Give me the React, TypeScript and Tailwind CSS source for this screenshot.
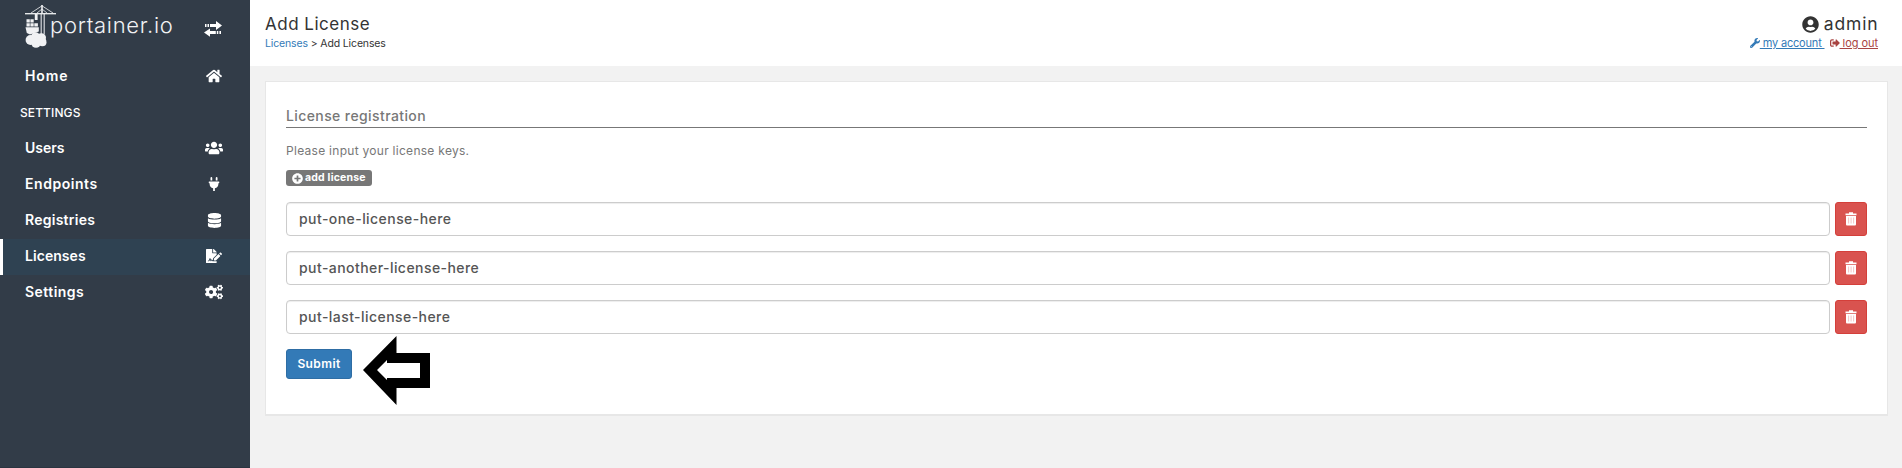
import React from "react";
import { FaCogs, FaDatabase, FaFileSignature, FaHome, FaPlug, FaPlusCircle, FaSignOutAlt, FaUserCircle, FaUsers, FaWrench } from "react-icons/fa";

function Logo() {
  return (
    <svg width="32" height="46" viewBox="0 0 32 46" fill="none" stroke="#f1f2f4">
      <path d="M0 9.7h31" strokeWidth="1.3" />
      <path d="M6 9 17 1.8 28 9M12 9l5-4 5 4" strokeWidth="0.8" />
      <path d="M17 1v8" strokeWidth="1.6" />
      <path d="M16.2 9v21M19.2 9v21" strokeWidth="1.2" opacity="0.85" />
      <g fill="#f1f2f4" stroke="none">
        <path d="M9.8 10h2.8v6H9.8zM1.5 15.3h3.3v3.3H1.5zM5.4 15.3h3.3v3.3H5.4zM1.5 19.2h3.3v3.3H1.5zM5.4 19.2h3.3v3.3H5.4zM9.3 19.2h3.6v3.3H9.3z" />
        <path d="M.5 23.2h13.3v4.2L5 30.5 1.8 29z" />
        <circle cx="5.5" cy="36" r="4.9" />
        <circle cx="10.5" cy="32.8" r="4.5" />
        <circle cx="16.4" cy="33.8" r="4.6" />
        <circle cx="17.4" cy="38.2" r="4.1" />
        <circle cx="11" cy="39" r="4.8" />
      </g>
    </svg>
  );
}

function TransferIcon() {
  return (
    <svg width="18" height="16" viewBox="0 0 18 16" fill="#fff">
      <path d="M12 0l6 4.4L12 9V6H6V3h6zM1 3h1.5v3H1zM3.5 3H5v3H3.5zM6 7.5V10h5.8v3H6v2.8L0 11.6zM12.8 10h1.5v3h-1.5zM15.4 10H17v3h-1.6z" />
    </svg>
  );
}

function TrashIcon() {
  return (
    <svg width="12" height="14" viewBox="0 0 12 14">
      <path fill="#fff" d="M4 .2h4v1.2h3.5v1.8H.5V1.4H4zM1 3.9h10v8.3c0 .7-.5 1.3-1.3 1.3H2.3C1.5 13.5 1 12.9 1 12.2z" />
      <path d="M3.6 5.5v6M6.1 5.5v6M8.6 5.5v6" stroke="#f3bfbd" strokeWidth="0.9" />
    </svg>
  );
}

type ItemProps = { label: string; tracking: string; active?: boolean; children: React.ReactNode };

function NavItem({ label, tracking, active = false, children }: ItemProps) {
  return (
    <a className={"flex h-9 items-center justify-between border-l-[3px] pr-[25px] pb-[2px] pl-[22px] text-[14px] font-semibold text-white " + (active ? "border-white bg-[#2f4252]" : "border-transparent")}>
      <span className={"pb-[1px] " + tracking}>{label}</span>
      <span className="flex w-[22px] justify-center">{children}</span>
    </a>
  );
}

const keys = ["put-one-license-here", "put-another-license-here", "put-last-license-here"];

export default function App() {
  return (
    <div className="flex h-[468px] w-full overflow-hidden bg-[#f2f2f2] font-['Inter','Liberation_Sans',sans-serif] text-[#333]">
      <aside className="w-[250px] shrink-0 border-b border-[#2b3440] bg-[#323c48]">
        <div className="flex h-[59px] justify-between pr-[28px] pl-[25px]">
          <div className="flex pt-[4px]">
            <Logo />
            <span className="-ml-[7px] pt-[6px] text-[22px] leading-[30px] font-light tracking-[0.7px] text-[#f1f2f4]">portainer.io</span>
          </div>
          <div className="pt-[21px]"><TransferIcon /></div>
        </div>
        <nav>
          <NavItem label="Home" tracking="tracking-[0.9px]"><FaHome size={16} /></NavItem>
          <div className="flex h-9 items-center pl-5 text-[12px] font-medium tracking-[0.1px] text-white">SETTINGS</div>
          <NavItem label="Users" tracking="tracking-[0px]"><FaUsers size={18} /></NavItem>
          <NavItem label="Endpoints" tracking="tracking-[0.55px]"><FaPlug size={14} /></NavItem>
          <NavItem label="Registries" tracking="tracking-[0.25px]"><FaDatabase size={15} /></NavItem>
          <NavItem label="Licenses" tracking="tracking-[0.05px]" active><FaFileSignature size={16} /></NavItem>
          <NavItem label="Settings" tracking="tracking-[0.45px]"><FaCogs size={18} /></NavItem>
        </nav>
      </aside>
      <main className="min-w-0 flex-1">
        <header className="flex h-[66px] justify-between bg-white pt-[14px] pr-6 pl-[15px]">
          <div>
            <h1 className="text-[17px] leading-[20px] tracking-[0.5px]">Add License</h1>
            <div className="mt-[3px] text-[10.5px] leading-[14px] tracking-[-0.14px]"><a className="text-[#337ab7]">Licenses</a> &gt; Add Licenses</div>
          </div>
          <div className="flex flex-col items-end">
            <div className="flex h-[20px] items-center gap-[5px] text-[17px]"><FaUserCircle size={17} /><span className="-mr-[0.5px] text-[17.5px] tracking-[0.85px]">admin</span></div>
            <div className="mt-[2px] flex text-[11px] leading-[14px]">
              <a className="flex items-center text-[#337ab7]"><FaWrench size={10} /><span className="tracking-[-0.18px] whitespace-pre underline"> my account </span></a>
              <a className="ml-[5px] flex items-center text-[#a94442]"><FaSignOutAlt size={10} /><span className="tracking-[-0.05px] whitespace-pre underline"> log out</span></a>
            </div>
          </div>
        </header>
        <section className="mt-[15px] mr-[14px] ml-[15px] h-[335px] border border-b-2 border-[#e7e7e7] bg-white px-5 pt-[23px]">
          <h2 className="h-[23px] border-b border-[#777] text-[14px] leading-[22px] font-[450] tracking-[0.4px] text-[#777]">License registration</h2>
          <p className="mt-[13px] text-[12px] leading-[20px] tracking-[0.28px] text-[#777]">Please input your license keys.</p>
          <button className="mt-[9px] flex h-4 w-[86px] items-center gap-[2px] rounded-[3px] bg-[#777] pl-[6px] text-[10.5px] font-bold whitespace-nowrap text-white">
            <FaPlusCircle size={11} /><span className="tracking-[0.2px]">add license</span>
          </button>
          <div className="mt-4 flex flex-col gap-[15px]">
            {keys.map((key) => (
              <div key={key} className="flex h-[34px] gap-[5px]">
                <div className="flex flex-1 items-center rounded-[4px] border border-[#ccc] pb-[1px] pl-3 text-[14px] font-[450] tracking-[0.44px] text-[#555] shadow-[inset_0_1px_1px_rgba(0,0,0,0.075)]">{key}</div>
                <button className="flex w-8 items-center justify-center rounded-[3px] border border-[#d43f3a] bg-[#d9534f]"><TrashIcon /></button>
              </div>
            ))}
          </div>
          <div className="relative mt-[15px] flex">
            <button className="h-[30px] w-[66px] rounded-[3px] border border-[#2e6da4] bg-[#337ab7] text-[12px] font-semibold tracking-[0.4px] text-white">Submit</button>
            <svg className="absolute top-[-13px] left-[77px]" width="68" height="69" viewBox="0 0 68 69">
              <path fill="#000" fillRule="evenodd" d="M0 34 33.5 0v17H67v35H33.5v17zM14 34l10 10v-2h33V27H24v-3z" />
            </svg>
          </div>
        </section>
      </main>
    </div>
  );
}
